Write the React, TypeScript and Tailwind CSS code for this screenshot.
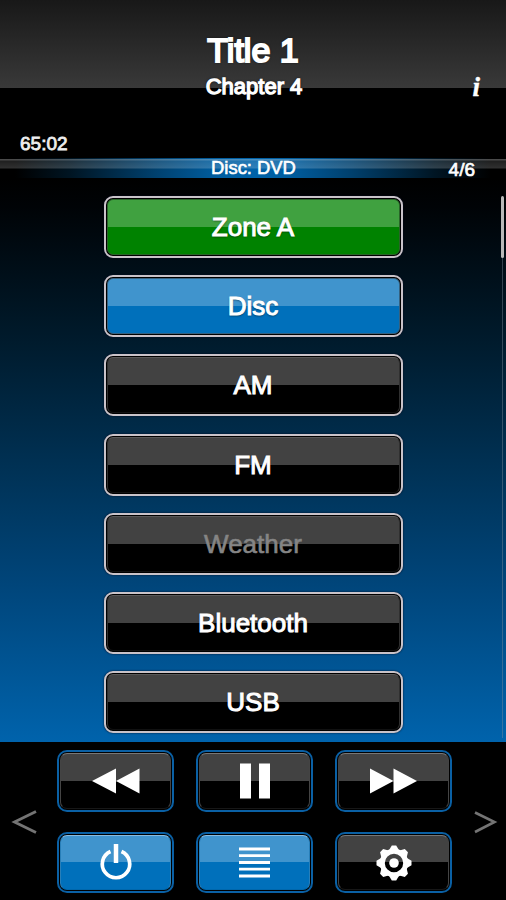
import type { ReactNode } from "react";
import clsx from "clsx";

const sources = [
  { name: "Zone A", color: "green" },
  { name: "Disc", color: "blue" },
  { name: "AM", color: "dark" },
  { name: "FM", color: "dark" },
  { name: "Weather", color: "dark", disabled: true },
  { name: "Bluetooth", color: "dark" },
  { name: "USB", color: "dark" },
];

const fills: Record<string, string> = {
  green: "bg-[linear-gradient(#40a140_50%,#008200_50%)] border-[#286428]",
  blue: "bg-[linear-gradient(#4094cd_50%,#0070bb_50%)] border-[#35617f]",
  dark: "bg-[linear-gradient(#424242_50%,#000_50%)] border-x-[#303030] border-t-[#585858] border-b-[#111]",
};

type SourceProps = { name: string; color: string; disabled?: boolean };

const SourceButton = ({ name, color, disabled }: SourceProps) => (
  <button
    disabled={disabled}
    className="h-[62px] w-[299px] rounded-[9px] border-2 border-[#c9c3c9] bg-black p-px shadow-[0_0_2px_#000a20]"
  >
    <span
      className={clsx(
        "flex h-full items-center justify-center rounded-md border text-[26px] leading-none",
        fills[color],
        disabled
          ? "text-[#858585] [-webkit-text-stroke:0.6px_#858585]"
          : "text-white [-webkit-text-stroke:1px_white] [text-shadow:0_1px_2px_#0009]"
      )}
    >
      {name}
    </span>
  </button>
);

const ControlButton = ({ active, children }: { active?: boolean; children: ReactNode }) => (
  <button className="h-full w-[117px] rounded-[10px] border-2 border-[#0a60a4] bg-black p-px">
    <span
      className={clsx(
        "flex h-full items-center justify-center rounded-[7px] border",
        active
          ? "border-t-[#8abce0] border-x-[#287fb9] border-b-[#0067ac] bg-[linear-gradient(#4094cd_50%,#0070bb_50%)]"
          : "border-t-[#777] border-x-[#444] border-b-[#171717] bg-[linear-gradient(#424242_50%,#000_50%)]"
      )}
    >
      {children}
    </span>
  </button>
);

const Header = () => (
  <header className="flex h-[158px] flex-col items-center bg-[linear-gradient(#181818,#393939_88px,#000_88px)] pt-[31px] text-white">
    <h1 className="text-[34px] leading-[38px] [-webkit-text-stroke:2px_white] [text-shadow:0_0_3px_black]">
      Title 1
    </h1>
    <div className="grid w-full grid-cols-[1fr_auto_1fr] items-center pt-1">
      <h2 className="col-start-2 pl-0.5 text-[22px] leading-7 [-webkit-text-stroke:1.3px_white] [text-shadow:0_0_3px_black]">
        Chapter 4
      </h2>
      <span className="justify-self-end pr-[26px] font-['Liberation_Serif',serif] text-[27px] leading-7 font-bold italic [-webkit-text-stroke:0.4px_white]">
        i
      </span>
    </div>
    <time className="mt-auto self-start pb-[3px] pl-5 text-[19px] leading-[22px] text-[#eee] [-webkit-text-stroke:0.8px_#eee]">
      65:02
    </time>
  </header>
);

const StatusBar = () => (
  <div className="h-5 bg-[linear-gradient(90deg,#000_3%,#001523_14%,#00416f_31%,#005d9f_43%,#0062a8_50%,#005d9f_57%,#00416f_69%,#001523_86%,#000_97%)]">
    <div className="grid h-full grid-cols-3 bg-[linear-gradient(transparent_1px,#ffffff4a_1px,#ffffff4a_2px,#ffffff20_3px,#ffffff30_10px,transparent_11px)] text-white">
      <span className="col-start-2 justify-self-center pl-px text-[18.4px] leading-5 [-webkit-text-stroke:0.6px_white]">
        Disc: DVD
      </span>
      <span className="justify-self-end pr-[31px] text-[19px] leading-6 [-webkit-text-stroke:0.7px_white]">
        4/6
      </span>
    </div>
  </div>
);

const SourceList = () => (
  <main className="relative flex h-[564px] flex-col items-center gap-[17.2px] bg-[linear-gradient(#000,#000306_5%,#001a2b_28%,#003052_50%,#00457a_72%,#0063ac)] pt-[18px]">
    {sources.map((source) => (
      <SourceButton key={source.name} {...source} />
    ))}
    <div className="absolute top-[18px] right-[2px] flex h-[542px] w-[3px] justify-center">
      <div className="h-full w-px bg-[#8290a066]" />
      <div className="absolute top-0 h-[62px] w-[3px] rounded-full bg-[#b8b8b8]" />
    </div>
  </main>
);

const teeth = [0, 45, 90, 135, 180, 225, 270, 315];

const Controls = () => (
  <footer className="flex h-[158px] items-start justify-between bg-black pt-2">
    <svg width="57" height="142" className="text-[#747474]">
      <path d="M36 61.5 14.5 72 36 82.5" fill="none" stroke="currentColor" strokeWidth="2.8" />
    </svg>
    <div className="grid grid-cols-3 grid-rows-[62px_61px] gap-x-[22px] gap-y-5 text-white">
      <ControlButton>
        <svg width="48" height="26" fill="currentColor">
          <path d="M0 13 24 .5v25zM24 13 47.5.5v25z" />
        </svg>
      </ControlButton>
      <ControlButton>
        <svg width="30" height="36" fill="currentColor">
          <path d="M0 .5h11v35H0zM19 .5h11v35H19z" />
        </svg>
      </ControlButton>
      <ControlButton>
        <svg width="48" height="26" fill="currentColor">
          <path d="M0 .5 23.5 13 0 25.5zM23.5.5 47 13 23.5 25.5z" />
        </svg>
      </ControlButton>
      <ControlButton active>
        <svg width="34" height="38" fill="none" stroke="currentColor">
          <path d="M11.5 7.5A13.7 13.7 0 1 0 22.500 7.500" strokeWidth="3.7" />
          <path d="M17 0v19" strokeWidth="4.5" />
        </svg>
      </ControlButton>
      <ControlButton active>
        <svg width="31" height="31" fill="none" stroke="currentColor">
          <path d="M0 2h31M0 8.7h31M0 15.5h31M0 22.2h31M0 29h31" strokeWidth="2.8" />
        </svg>
      </ControlButton>
      <ControlButton>
        <svg width="36" height="36" viewBox="-18 -18 36 36" fill="currentColor">
          {teeth.map((angle) => (
            <path key={angle} d="M-5.5-12-2.2-17.5h4.400L5.500-12z" transform={`rotate(${angle})`} />
          ))}
          <circle r="11.7" fill="none" stroke="currentColor" strokeWidth="5" />
          <circle r="4.8" />
        </svg>
      </ControlButton>
    </div>
    <svg width="54" height="142" className="text-[#747474]">
      <path d="M23 62.5 42.500 72 23 82" fill="none" stroke="currentColor" strokeWidth="2.6" />
    </svg>
  </footer>
);

const App = () => {
  return (
    <div className="h-[900px] w-[506px] overflow-hidden bg-black font-['Liberation_Sans',sans-serif]">
      <Header />
      <StatusBar />
      <SourceList />
      <Controls />
    </div>
  );
};

export default App;
